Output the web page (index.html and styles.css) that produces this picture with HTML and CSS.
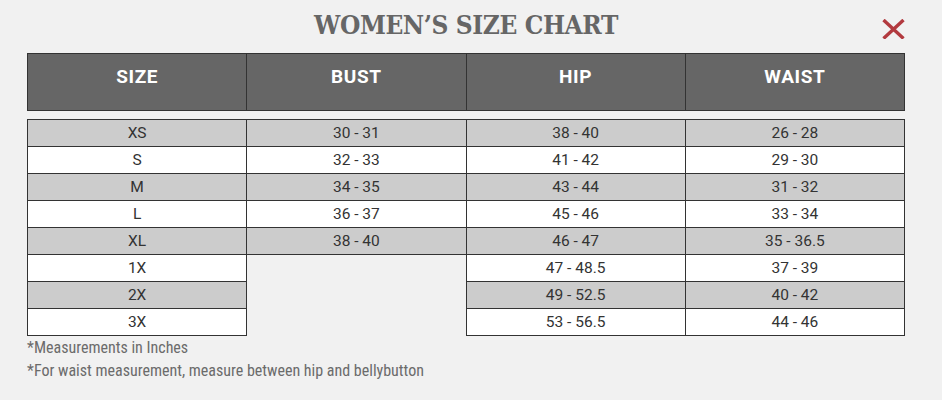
FILE: index.html
```html
<!DOCTYPE html>
<html>
<head>
<meta charset="utf-8">
<link rel="stylesheet" href="styles.css">
</head>
<body>
<div class="chart">
  <div class="title-row">
    <h1 class="title">WOMEN’S SIZE CHART</h1>
    <button class="close" aria-label="Close">
      <svg width="24" height="20" viewBox="0 0 24 20"><path d="M2.5 1 L22.5 19.5 M22.5 1 L2.5 19.5" stroke="#b23a3f" stroke-width="3.4" fill="none"/></svg>
    </button>
  </div>
  <table class="head">
    <tr><th>SIZE</th><th>BUST</th><th>HIP</th><th>WAIST</th></tr>
  </table>
  <table class="body">
    <tr class="g"><td>XS</td><td>30 - 31</td><td>38 - 40</td><td>26 - 28</td></tr>
    <tr class="w"><td>S</td><td>32 - 33</td><td>41 - 42</td><td>29 - 30</td></tr>
    <tr class="g"><td>M</td><td>34 - 35</td><td>43 - 44</td><td>31 - 32</td></tr>
    <tr class="w"><td>L</td><td>36 - 37</td><td>45 - 46</td><td>33 - 34</td></tr>
    <tr class="g"><td>XL</td><td>38 - 40</td><td>46 - 47</td><td>35 - 36.5</td></tr>
    <tr class="w"><td>1X</td><td class="empty"></td><td>47 - 48.5</td><td>37 - 39</td></tr>
    <tr class="g"><td>2X</td><td class="empty"></td><td>49 - 52.5</td><td>40 - 42</td></tr>
    <tr class="w"><td>3X</td><td class="empty"></td><td>53 - 56.5</td><td>44 - 46</td></tr>
  </table>
  <div class="notes">
    <p>*Measurements in Inches</p>
    <p>*For waist measurement, measure between hip and bellybutton</p>
  </div>
</div>
</body>
</html>
```
FILE: styles.css
```css
html, body {
  margin: 0;
  background: #f1f1f1;
}
.chart {
  width: 878px;
  margin-left: 27px;
}
.title-row {
  position: relative;
  height: 53px;
}
.title {
  margin: 0;
  padding-top: 9px;
  text-align: center;
  font-family: "DejaVu Serif Condensed", "DejaVu Serif", serif;
  font-stretch: condensed;
  font-weight: bold;
  font-size: 26px;
  line-height: 32px;
  color: #666666;
  letter-spacing: -0.4px;
}
.close {
  position: absolute;
  right: 0;
  top: 19px;
  border: 0;
  background: none;
  padding: 0;
  line-height: 0;
}
table {
  width: 878px;
  border-collapse: collapse;
  table-layout: fixed;
  font-family: Roboto, "Noto Sans", sans-serif;
}
th, td {
  border: 1px solid #333333;
  text-align: center;
  padding: 0;
}
.head th {
  background: #666666;
  color: #ffffff;
  font-size: 19px;
  font-weight: bold;
  letter-spacing: 0.6px;
  height: 57px;
  line-height: 26px;
  vertical-align: top;
  padding-top: 10px;
  box-sizing: border-box;
}
.body {
  margin-top: 8px;
}
.body td {
  height: 26px;
  font-size: 15.5px;
  color: #333333;
  line-height: 26px;
}
.body tr.g td { background: #cccccc; }
.body tr.w td { background: #ffffff; }
.body td.empty {
  background: transparent !important;
  border: none;
}
.notes {
  margin-top: 0;
  font-family: "Liberation Sans Narrow", "Roboto Condensed", Roboto, sans-serif;
  font-size: 16px;
  color: #6b6b6b;
}
.notes p {
  margin: 0;
  line-height: 23px;
}
```
